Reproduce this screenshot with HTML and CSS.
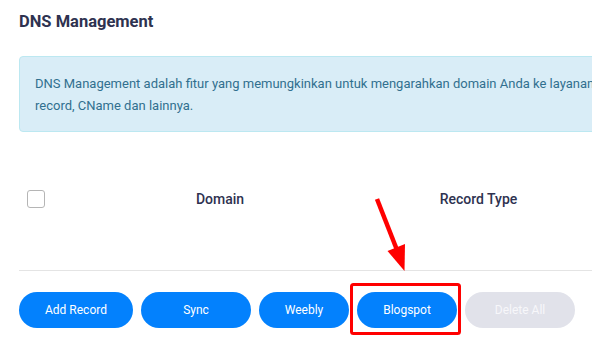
FILE: index.html
```html
<!DOCTYPE html>
<html lang="id">
<head>
<meta charset="utf-8">
<title>DNS Management</title>
<link rel="stylesheet" href="styles.css">
</head>
<body>
<div class="page">
  <h1 class="title">DNS Management</h1>
  <div class="alert">DNS Management adalah fitur yang memungkinkan untuk mengarahkan domain Anda ke layanan hosting lain seperti A<br>record, CName dan lainnya.</div>
  <div class="table">
    <div class="thead">
      <div class="cell cell-check"><span class="checkbox"></span></div>
      <div class="cell cell-domain">Domain</div>
      <div class="cell cell-type">Record Type</div>
    </div>
    <div class="tbody"></div>
  </div>
  <div class="actions">
    <button class="btn btn-add">Add Record</button>
    <button class="btn btn-sync">Sync</button>
    <button class="btn btn-weebly">Weebly</button>
    <button class="btn btn-blogspot">Blogspot</button>
    <button class="btn btn-delete" disabled>Delete All</button>
  </div>
  <svg class="annotation" width="592" height="349" viewBox="0 0 592 349" aria-hidden="true">
    <line x1="377" y1="199" x2="397" y2="250" stroke="#ff0000" stroke-width="4.5"/>
    <polygon points="387.5,251 405,244 404.5,271" fill="#ff0000"/>
    <rect x="351.5" y="284.5" width="108" height="49" rx="2" fill="none" stroke="#ff0000" stroke-width="3"/>
  </svg>
</div>
</body>
</html>
```
FILE: styles.css
```css
html, body {
  margin: 0;
  padding: 0;
  background: #ffffff;
  overflow: hidden;
}
body {
  font-family: Roboto, "Liberation Sans", sans-serif;
  width: 592px;
  height: 349px;
}
.page {
  position: relative;
  width: 760px;
  padding: 11px 0 0 19px;
  box-sizing: border-box;
}
.title {
  margin: 0;
  font-size: 16.5px;
  line-height: 22px;
  font-weight: 700;
  color: #2e3250;
}
.alert {
  margin-top: 23px;
  background: #d9edf7;
  border: 1px solid #bce8f1;
  border-radius: 4px;
  padding: 16px 15px 14px 15px;
  font-size: 13px;
  line-height: 22px;
  color: #31708f;
  white-space: nowrap;
}
.table {
  margin-top: 46px;
}
.thead {
  display: grid;
  grid-template-columns: 60px 282px 235px 1fr;
  height: 42px;
  align-items: center;
}
.cell {
  font-size: 14px;
  font-weight: 500;
  color: #2e3250;
  text-align: center;
}
.cell-check {
  display: flex;
  padding-left: 8px;
}
.checkbox {
  display: block;
  width: 18px;
  height: 18px;
  box-sizing: border-box;
  border: 1px solid #b5b5b5;
  border-radius: 3px;
  background: #fff;
}
.tbody {
  height: 50px;
  border-bottom: 1px solid #e4e4e4;
}
.actions {
  display: flex;
  gap: 8px;
  padding-top: 21px;
}
.btn {
  height: 36px;
  border: none;
  border-radius: 18px;
  background: #0381fd;
  color: #ffffff;
  font-family: Roboto, "Liberation Sans", sans-serif;
  font-size: 12px;
  padding: 0;
  cursor: pointer;
}
.btn-add { width: 114px; }
.btn-sync { width: 110px; }
.btn-weebly { width: 90px; }
.btn-blogspot { width: 100px; }
.btn-delete {
  width: 110px;
  background: #e1e2ea;
  color: #f7f7fa;
  cursor: default;
}
.annotation {
  position: absolute;
  left: 0;
  top: 0;
  pointer-events: none;
}
```
